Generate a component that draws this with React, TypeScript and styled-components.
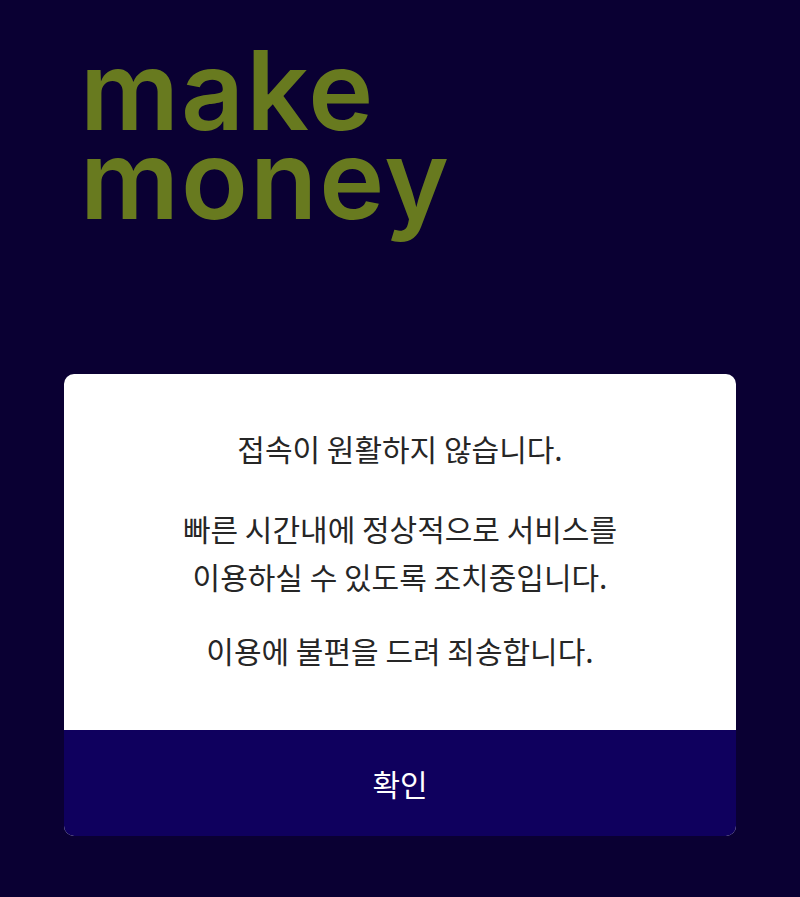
import React from "react";
import styled, { createGlobalStyle } from "styled-components";

const Global = createGlobalStyle`
  html, body { margin: 0; padding: 0; background: #0a0033; }
  body { font-family: "Noto Sans CJK KR", "Noto Sans", sans-serif; }
`;

const Page = styled.div`
  width: 800px;
  height: 897px;
  background: #0a0033;
  display: flex;
  flex-direction: column;
  box-sizing: border-box;
  padding: 46px 64px 0 64px;
  overflow: hidden;
`;

const Logo = styled.h1`
  margin: 0 0 0 16px;
  font-family: "Inter", "Open Sans", sans-serif;
  font-weight: 600;
  font-size: 110px;
  line-height: 89px;
  letter-spacing: 2px;
  color: #687a1f;
`;

const Dialog = styled.div`
  margin-top: 150px;
  width: 672px;
  border-radius: 10px;
  overflow: hidden;
  background: #ffffff;
  display: flex;
  flex-direction: column;
`;

const Body = styled.div`
  padding: 50px 0 56px;
  display: flex;
  flex-direction: column;
  align-items: center;
`;

const Paragraph = styled.p<{ $space?: number }>`
  margin: ${(p) => p.$space ?? 0}px 0 0;
  font-size: 30px;
  line-height: 48px;
  color: #262626;
  text-align: center;
`;

const ConfirmButton = styled.button`
  height: 106px;
  border: none;
  background: #0f005e;
  color: #ffffff;
  font-family: "Noto Sans CJK KR", sans-serif;
  font-size: 30px;
  cursor: pointer;
`;

export default function App() {
  return (
    <Page>
      <Global />
      <Logo>
        make
        <br />
        money
      </Logo>
      <Dialog>
        <Body>
          <Paragraph>접속이 원활하지 않습니다.</Paragraph>
          <Paragraph $space={32}>
            빠른 시간내에 정상적으로 서비스를
            <br />
            이용하실 수 있도록 조치중입니다.
          </Paragraph>
          <Paragraph $space={26}>이용에 불편을 드려 죄송합니다.</Paragraph>
        </Body>
        <ConfirmButton>확인</ConfirmButton>
      </Dialog>
    </Page>
  );
}
